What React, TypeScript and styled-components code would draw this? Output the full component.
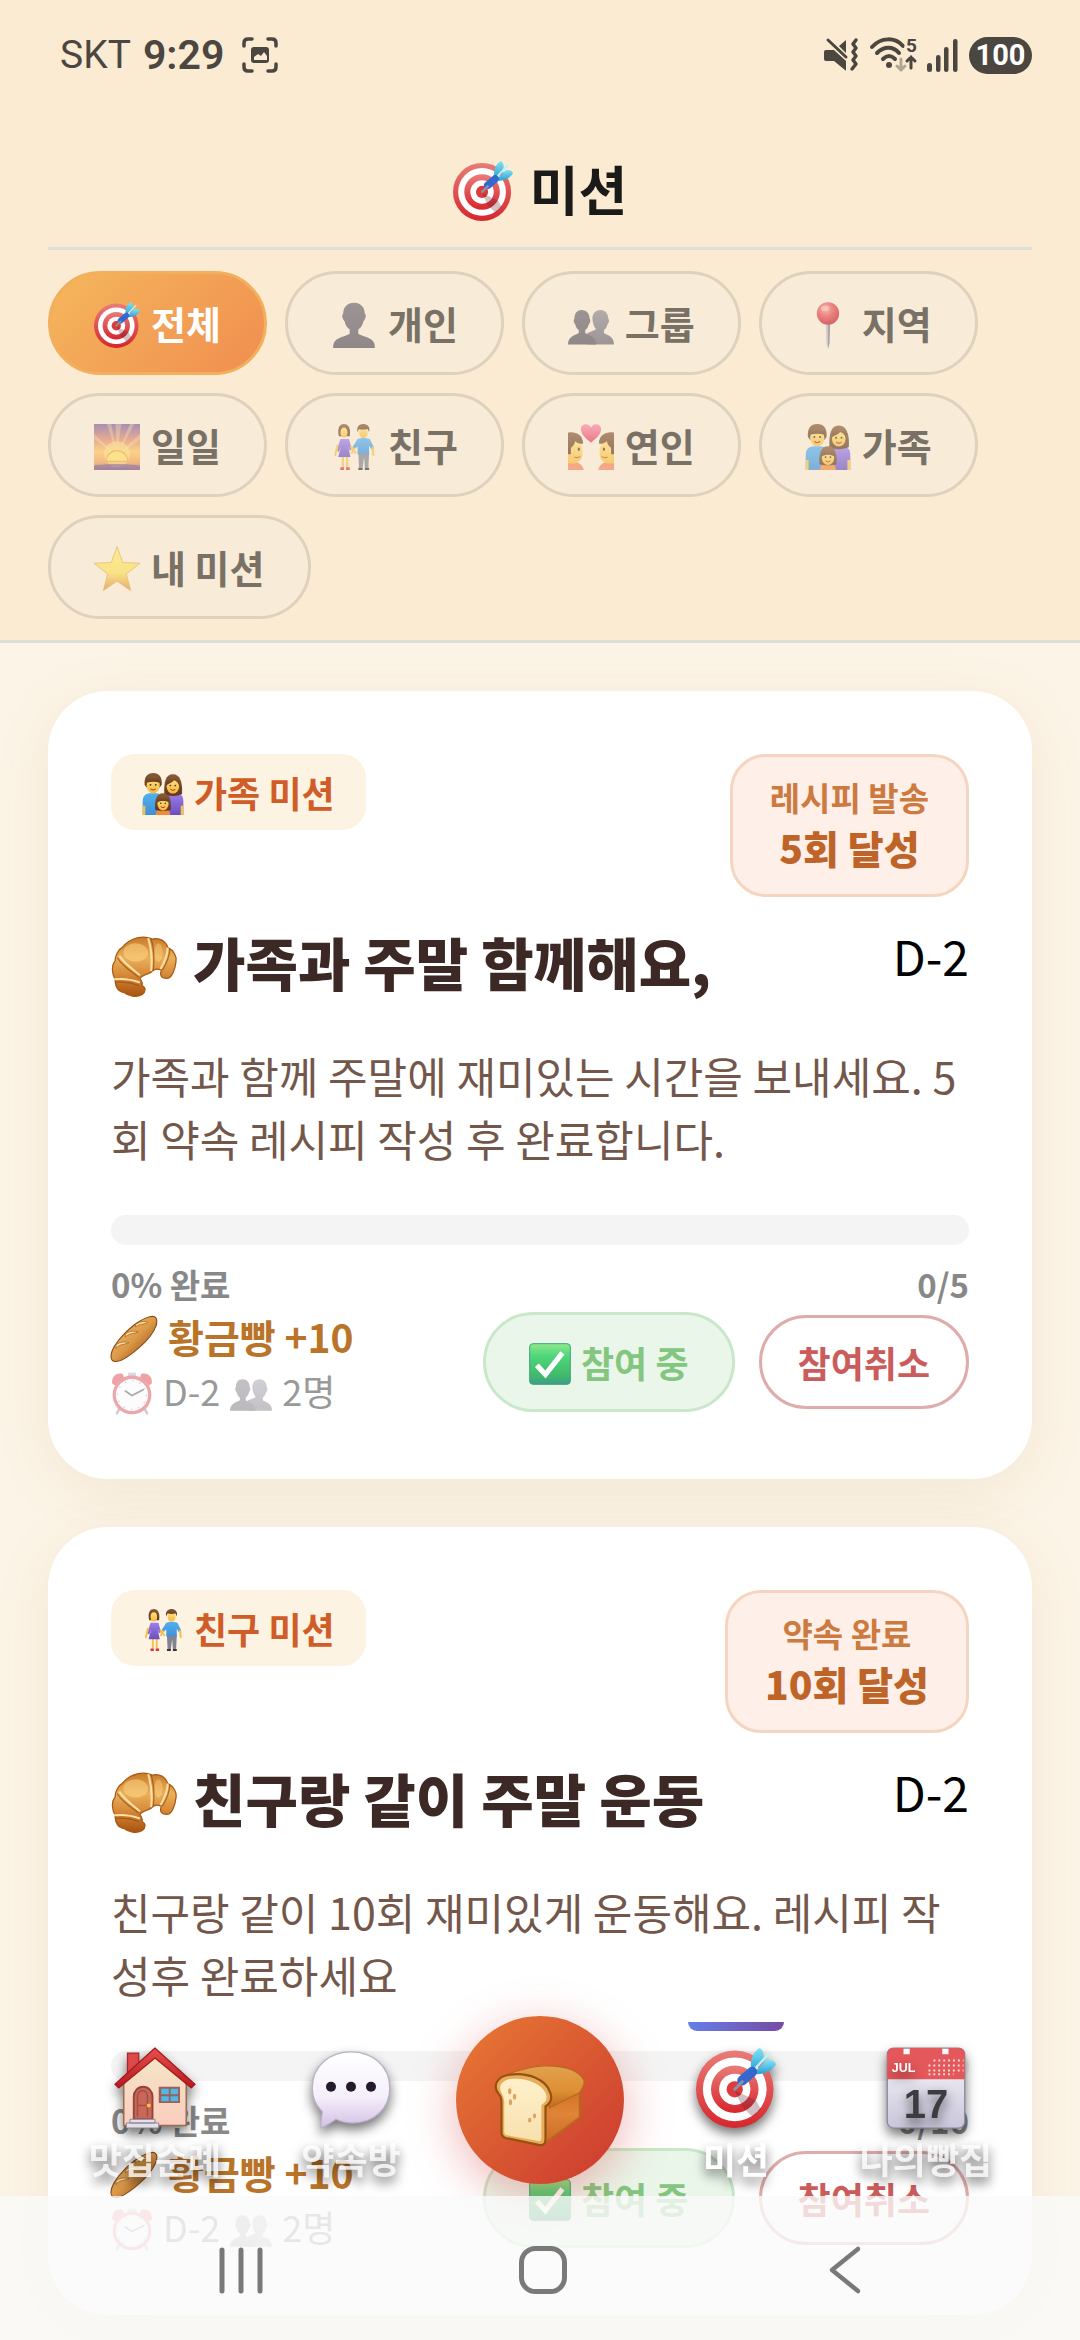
import React from "react";
import styled, { createGlobalStyle } from "styled-components";

const GlobalStyle = createGlobalStyle`
  *, *::before, *::after { box-sizing: border-box; }
  html { background: #fcf4e6; }
  body {
    margin: 0;
    font-family: "Noto Sans CJK KR", "Noto Sans", sans-serif;
    color: #000;
    -webkit-font-smoothing: antialiased;
  }
  button { font-family: inherit; cursor: pointer; }
  h1, h2, p { margin: 0; }
`;

/* ---------- drawings ---------- */

/* $drop lowers a glyph inside a centred row so that it sits on the text's baseline */
const Glyph = styled.svg<{ $size: number; $fade?: number; $drop?: number }>`
  display: block;
  flex: none;
  width: ${(p) => p.$size}px;
  height: ${(p) => p.$size}px;
  margin-top: ${(p) => p.$drop ?? 4}px;
  opacity: ${(p) => p.$fade ?? 1};
  overflow: visible;
`;

const HiddenDefs = styled.svg`
  position: absolute;
  width: 0;
  height: 0;
`;

type Stop = [string, string];
const gradients: { id: string; stops: Stop[]; dir?: "v" | "d" | "r" }[] = [
  { id: "gRed", stops: [["0", "#e97c78"], ["1", "#d7262c"]], dir: "v" },
  { id: "gDart", stops: [["0", "#7fe3f5"], ["1", "#2b9fd0"]], dir: "v" },
  { id: "gBust", stops: [["0", "#6a6570"], ["1", "#5a5260"]], dir: "v" },
  { id: "gBust2", stops: [["0", "#8d8a92"], ["1", "#6d6675"]], dir: "v" },
  { id: "gPin", stops: [["0", "#f49a9a"], ["0.5", "#e5494f"], ["1", "#c01f2c"]], dir: "r" },
  { id: "gSky", stops: [["0", "#7c5fa0"], ["0.35", "#e08b6c"], ["0.6", "#fcc45e"], ["0.85", "#f19a52"], ["1", "#7c4f86"]], dir: "v" },
  { id: "gStar", stops: [["0", "#fff06a"], ["0.6", "#fbdc5c"], ["1", "#dc8a3c"]], dir: "v" },
  { id: "gHair", stops: [["0", "#8a5a35"], ["1", "#5f3820"]], dir: "v" },
  { id: "gSkin", stops: [["0", "#ffe07a"], ["1", "#f5b83d"]], dir: "v" },
  { id: "gBlue", stops: [["0", "#52b1ee"], ["1", "#3f8fd8"]], dir: "v" },
  { id: "gViolet", stops: [["0", "#9c7fe8"], ["1", "#6b4ec0"]], dir: "v" },
  { id: "gHeart", stops: [["0", "#fb8ba6"], ["1", "#e23a62"]], dir: "v" },
  { id: "gCrust", stops: [["0", "#c97a2a"], ["0.35", "#eab05a"], ["0.6", "#d98e3c"], ["1", "#a8520f"]], dir: "v" },
  { id: "gBag", stops: [["0", "#f3c277"], ["0.5", "#dd9a48"], ["1", "#7d3c0c"]], dir: "d" },
  { id: "gCheck", stops: [["0", "#8fe88c"], ["0.3", "#4fd67a"], ["0.8", "#40b86a"], ["1", "#3f9c90"]], dir: "v" },
  { id: "gWall", stops: [["0", "#f3e6c4"], ["1", "#fbcdbf"]], dir: "v" },
  { id: "gRoof", stops: [["0", "#e8504e"], ["1", "#b5191f"]], dir: "v" },
  { id: "gBubble", stops: [["0", "#ffffff"], ["0.6", "#f4effa"], ["1", "#d3bfe6"]], dir: "v" },
  { id: "gLoafTop", stops: [["0", "#e2a14e"], ["0.6", "#dd8f33"], ["1", "#c06a1c"]], dir: "v" },
  { id: "gLoafSide", stops: [["0", "#c96c20"], ["0.5", "#e08438"], ["1", "#c96a22"]], dir: "v" },
  { id: "gCrumb", stops: [["0", "#fff0cb"], ["1", "#f8e0ae"]], dir: "v" },
  { id: "gPage", stops: [["0", "#fafafc"], ["1", "#c9c6da"]], dir: "v" },
];

const Defs = () => (
  <HiddenDefs aria-hidden="true">
    <defs>
      {gradients.map((g) =>
        g.dir === "r" ? (
          <radialGradient key={g.id} id={g.id} cx="0.4" cy="0.3" r="0.7">
            {g.stops.map(([o, c]) => <stop key={o} offset={o} stopColor={c} />)}
          </radialGradient>
        ) : (
          <linearGradient key={g.id} id={g.id} x1="0" y1="0" x2={g.dir === "d" ? "1" : "0"} y2="1">
            {g.stops.map(([o, c]) => <stop key={o} offset={o} stopColor={c} />)}
          </linearGradient>
        )
      )}
    </defs>
  </HiddenDefs>
);

const Target = () => (
  <>
    <circle cx="31" cy="33" r="31" fill="url(#gRed)" />
    <circle cx="31" cy="33" r="25.5" fill="#fff" />
    <circle cx="31" cy="33" r="19" fill="url(#gRed)" />
    <circle cx="31" cy="33" r="12.5" fill="#fff" />
    <circle cx="31" cy="33" r="6.5" fill="#dc3a3c" />
    <path d="M31 34l6 13 8 8 7-6-4-7z" fill="#5b2030" opacity=".28" />
    <path d="M44 16c-1-7 2-13 7-16 3 2 4 6 2 10l-7 9z" fill="url(#gDart)" />
    <path d="M47 19l9-9c4-1 7 0 8 3-3 5-9 8-15 8z" fill="url(#gDart)" />
    <path d="M44 20L58 5" stroke="#b9f3fb" strokeWidth="2" strokeLinecap="round" />
    <path d="M37 26L45 19" stroke="#3568cf" strokeWidth="8" strokeLinecap="round" />
    <path d="M31 33l6-6" stroke="#8a93a8" strokeWidth="2.5" strokeLinecap="round" />
  </>
);

const Bust = () => (
  <path d="M32 1c9 0 15 6 15 15 1 1 2 3 1 6-1 3-2 4-3 5-1 6-4 9-7 11v6c3 3 20 5 22 13 1 3 1 5 1 7H3c0-2 0-4 1-7 2-8 19-10 22-13v-6c-3-2-6-5-7-11-1-1-2-2-3-5-1-3 0-5 1-6C17 7 23 1 32 1z" fill="url(#gBust)" />
);

const Busts = () => (
  <>
    <path d="M45 11c7 0 11 5 11 12 2 2 1 6-1 8-1 4-3 7-5 8v4c4 3 14 4 14 16H27V43c5-2 9-3 12-5-3-4-5-9-5-15 0-7 4-12 11-12z" fill="url(#gBust2)" />
    <path d="M19 11c7 0 11 5 11 12 2 2 1 6-1 8-1 4-3 7-5 8v4c4 3 15 4 15 16H0c0-12 11-13 15-16v-4c-2-1-4-4-5-8-2-2-3-6-1-8 0-7 3-12 10-12z" fill="url(#gBust)" />
  </>
);

const Pin = () => (
  <>
    <path d="M29 30h6l-1 28-2 7-2-7z" fill="#b9b8c2" />
    <path d="M32 30h3l-1 28-2 7z" fill="#85828f" />
    <circle cx="32" cy="16" r="15.5" fill="url(#gPin)" />
    <ellipse cx="28" cy="9" rx="6" ry="4" fill="#fff" opacity=".3" />
  </>
);

const Sunrise = () => (
  <>
    <rect width="64" height="64" fill="url(#gSky)" />
    <path d="M32 44L18 0h6zM32 44L30 0h8zM32 44L50 0h6zM32 44L0 14v7zM32 44L64 14v8z" fill="#ffe9a0" opacity=".35" />
    <circle cx="32" cy="42" r="18" fill="#ffe680" opacity=".5" />
    <path d="M17 52a15 15 0 0130 0z" fill="#ffdc66" stroke="#f0a63c" strokeWidth="1.5" />
    <path d="M0 58c14-3 48-3 64 0v6H0z" fill="#6f4b86" opacity=".7" />
  </>
);

const Star = () => (
  <path d="M32 1l8 22 24 1-19 15 6 23-19-13-19 13 6-23L0 24l24-1z" fill="url(#gStar)" stroke="#dc9a3a" strokeWidth="1" />
);

const Couple = () => (
  <>
    <path d="M11 17C8 4 13 0 18 0s10 4 8 17z" fill="url(#gHair)" />
    <path d="M15 40h3v20h-3zM21 40h3v20h-3z" fill="#f2c14e" />
    <path d="M13 21h12l4 14-3 2-2-6 3 15H10l4-15-3 8-3-2z" fill="url(#gViolet)" />
    <path d="M9 30l-3 13M28 32l6 8" stroke="#f2c14e" strokeWidth="3" strokeLinecap="round" />
    <ellipse cx="18" cy="12" rx="5" ry="7" fill="url(#gSkin)" />
    <path d="M13 60h5v4h-5zM21 60h5v4h-5z" fill="#d8323e" />
    <path d="M38 40h15l-1 21h-5l-1-15-2 15h-5z" fill="#83838f" />
    <path d="M37 21c5-2 12-2 17 0l6 12-4 2-3-5v12H37V31l-4 4-3-3z" fill="url(#gBlue)" />
    <path d="M58 33l1 10M32 34l-3 6" stroke="#f2c14e" strokeWidth="3" strokeLinecap="round" />
    <ellipse cx="45" cy="12" rx="6" ry="7.5" fill="url(#gSkin)" />
    <path d="M37 11C35 3 40 0 45 0s10 3 8 11l-2-4c-4 1-8 1-12 0z" fill="url(#gHair)" />
    <path d="M38 61h6v3h-6zM47 61h6v3h-6z" fill="#3c3138" />
  </>
);

const Lovers = () => (
  <>
    <path d="M32 26C22 18 18 13 18 7c0-8 11-9 14-2 3-7 14-6 14 2 0 6-4 11-14 19z" fill="url(#gHeart)" />
    <path d="M0 52c10-1 20 2 22 12H0zM64 52c-10-1-20 2-22 12h22z" fill="#f4845c" />
    <path d="M0 22h14c5 6 7 14 6 22-2 8-8 11-14 11H0z" fill="url(#gSkin)" />
    <path d="M64 22H50c-5 6-7 14-6 22 2 8 8 11 14 11h6z" fill="url(#gSkin)" />
    <path d="M0 12c10-2 21 3 21 15-4 1-8 0-11-3-1 5-4 8-6 9v9H0z" fill="url(#gHair)" />
    <path d="M64 12c-10-2-21 3-21 15 4 1 8 0 11-3 1 5 4 8 6 9v9h4z" fill="url(#gHair)" />
    <ellipse cx="15" cy="35" rx="1.4" ry="2.4" fill="#4a2f22" />
    <ellipse cx="50" cy="35" rx="1.4" ry="2.4" fill="#4a2f22" />
    <path d="M9 46q4 2 8-1M55 46q-4 2-8-1" stroke="#a85c2a" strokeWidth="1.5" fill="none" />
  </>
);

const Face = ({ x, y, s }: { x: number; y: number; s: number }) => (
  <g transform={`translate(${x} ${y}) scale(${s})`}>
    <ellipse rx="10" ry="12" fill="url(#gSkin)" />
    <circle cx="-4" cy="-1" r="1.4" fill="#4a2f22" />
    <circle cx="4" cy="-1" r="1.4" fill="#4a2f22" />
    <path d="M-4 5q4 4 8 0" stroke="#a2382a" strokeWidth="1.6" fill="none" />
  </g>
);

const Family = () => (
  <>
    <path d="M1 64V43c0-8 5-12 12-12h8c7 0 11 4 11 12v21z" fill="url(#gBlue)" />
    <path d="M32 64V43c0-8 5-12 12-12h7c8 0 12 4 12 12v21z" fill="url(#gViolet)" />
    <path d="M1 50h4v14H1zM59 50h4v14h-4z" fill="#f2c14e" />
    <path d="M34 32c-1-18 2-30 13-30s15 12 14 30c-6 4-22 4-27 0z" fill="url(#gHair)" />
    <path d="M4 18C3 6 8 0 17 0s14 6 13 18l-3 4H7z" fill="url(#gHair)" />
    <Face x={17} y={19} s={1} />
    <path d="M7 15C7 7 12 5 17 5s10 2 10 10c-6-2-14-2-20 0z" fill="url(#gHair)" />
    <Face x={47} y={20} s={0.95} />
    <path d="M37 19c0-9 4-13 10-13s10 4 10 13c-2-5-5-7-8-8-3 4-8 4-12 8z" fill="url(#gHair)" />
    <path d="M21 64c0-7 4-9 11-9s11 2 11 9z" fill="#f08a3c" />
    <path d="M20 56c-1-17 3-25 12-25s13 8 12 25c-4 2-20 2-24 0z" fill="url(#gHair)" />
    <Face x={32} y={47} s={0.85} />
    <path d="M23 45c0-7 3-10 9-10s9 3 9 10c-5-3-13-3-18 0z" fill="url(#gHair)" />
  </>
);

const Croissant = () => (
  <>
    <path d="M11 12C19 2 32 0 40 4c7-2 13 2 15 8 6 3 9 9 8 14-1 8-4 16-9 16-6 0-7-4-5-8-5-2-8-1-10 2-5 3-9 3-11 6 2 3 3 5 2 7 4 2 4 6 0 9-6 3-13 1-17-2-7-1-9-7-9-13C1 38 0 30 4 25c0-5 3-11 7-13z" fill="url(#gCrust)" stroke="#a8580f" strokeWidth="1.2" />
    <ellipse cx="24" cy="17" rx="12" ry="9" fill="#ffd98a" opacity=".5" />
    <ellipse cx="46" cy="17" rx="4" ry="9" fill="#ffd98a" opacity=".4" />
    <path d="M8 20c5 8 13 13 20 19M36 3c3 9 4 20 3 32M55 12c0 8-3 14-7 21M3 43c9-1 17 0 25 3" stroke="#fbe0a4" strokeWidth="2" fill="none" />
    <path d="M6 22c5 8 13 13 21 19M39 4c3 9 3 20 2 31M57 13c0 8-3 14-7 21M4 46c9-1 15 0 23 3" stroke="#9a4c0c" strokeWidth="1.2" fill="none" opacity=".7" />
  </>
);

const Baguette = () => (
  <>
    <path d="M2 62C-3 56 2 44 11 33 23 18 41 4 54 1c9-2 11 3 9 12-4 11-13 22-25 32C24 57 9 67 2 62z" fill="url(#gBag)" stroke="#8a460f" strokeWidth="1.5" />
    <path d="M7 40c7-5 13-4 18-3-5 3-12 1-18 8zM20 25c7-5 13-4 18-3-5 3-11 1-18 7zM34 12c7-5 13-5 17-3-4 3-10 1-17 6z" fill="#fde7b0" stroke="#a05e1c" strokeWidth="1" />
  </>
);

const Clock = () => (
  <>
    <path d="M2 18C0 8 8 0 18 3l2 6L7 21zM62 18C64 8 56 0 46 3l-2 6 13 12z" fill="#e0484e" />
    <path d="M26 1h12v6H26z" fill="#b9b6c0" />
    <path d="M14 54l-5 9M50 54l5 9" stroke="#9d9aa6" strokeWidth="4" strokeLinecap="round" />
    <circle cx="32" cy="35" r="27" fill="#fbfafc" stroke="#dc5258" strokeWidth="5" />
    <circle cx="32" cy="35" r="22" fill="none" stroke="#8c8894" strokeWidth="2" strokeDasharray="1.5 10" />
    <path d="M22 29l10 7 17-9" stroke="#55515c" strokeWidth="2.6" fill="none" strokeLinecap="round" />
  </>
);

const Check = () => (
  <>
    <rect x="1" y="1" width="62" height="62" rx="5" fill="url(#gCheck)" stroke="#3da47a" strokeWidth="1.5" />
    <path d="M12 34l13 14 26-33" stroke="#fff" strokeWidth="8" fill="none" />
  </>
);

const House = () => (
  <>
    <path d="M10 4h9v20h-9z" fill="#dd4848" stroke="#a8242a" strokeWidth="1" />
    <path d="M7 26L32 5l25 21v36H7z" fill="url(#gWall)" stroke="#9c6a4c" strokeWidth="1.2" />
    <path d="M32 0L0 29l3 3L32 8l29 24 3-3z" fill="url(#gRoof)" stroke="#a3171d" strokeWidth="1" />
    <path d="M15 57V39a7.500 8 0 0115 0v18z" fill="#c9675a" stroke="#92443c" strokeWidth="1.5" />
    <path d="M18 55V39a4 5 0 018 0v16M18 46h8" fill="none" stroke="#a5503f" strokeWidth="1.2" />
    <circle cx="27" cy="46" r="1.600" fill="#f7c13a" />
    <path d="M35 31h17v13H35z" fill="#9f5f52" />
    <path d="M37 32.500h6v4.500h-6zM44.500 32.500h6v4.500h-6zM37 38.500h6v4h-6zM44.500 38.500h6v4h-6z" fill="#4cb9ea" />
    <path d="M12 57h20v3H12zM9 60h26v4H9z" fill="#e4e0ea" stroke="#8d8794" strokeWidth=".8" />
  </>
);

const Bubble = () => (
  <>
    <path d="M32 3c17 0 31 11 31 29 0 17-13 28-30 28-5 0-9-1-13-3-3 2-7 5-12 7-1-5 1-9 1-13C4 46 1 40 1 32 1 14 15 3 32 3z" fill="url(#gBubble)" stroke="#b8b0c2" strokeWidth="1" />
    <circle cx="16" cy="31" r="4" fill="#231a2b" />
    <circle cx="32" cy="31" r="4" fill="#231a2b" />
    <circle cx="48" cy="31" r="4" fill="#231a2b" />
  </>
);

const Loaf = () => (
  <>
    <path d="M36 33L63 16l-2 8v17L34 61z" fill="url(#gLoafSide)" stroke="#b9661f" strokeWidth="1.5" />
    <path d="M3 12C14 7 24 4 35 3.500c16-.5 26 4 29 10.500 1 5-2 6-3 9L39 34C37 20 22 11 3 12z" fill="url(#gLoafTop)" stroke="#b9691f" strokeWidth="1" />
    <path d="M2 24C-3 18 1 11 10 10c14-2 26 4 29 12 3 6 0 9-3 11v24q0 5-5 4L7 56q-3-1-3-4V30q0-4-2-6z" fill="#e8ad5c" stroke="#96500f" strokeWidth="1.600" />
    <path d="M4 23c-3-5 1-9 7-10 12-1 22 4 25 10 2 5 0 7-3 9v24q0 3-3 2L8 54q-2 0-2-3V30q0-4-2-7z" fill="url(#gCrumb)" />
    <ellipse cx="10" cy="22" rx="1.200" ry="2.200" fill="#dba560" />
    <ellipse cx="13.500" cy="26" rx="1.200" ry="2.200" fill="#dba560" />
    <ellipse cx="10.500" cy="30" rx="1.200" ry="2.200" fill="#dba560" />
    <ellipse cx="28" cy="40" rx="1.200" ry="1.800" fill="#dba560" />
    <ellipse cx="24.500" cy="43" rx="1.200" ry="1.800" fill="#dba560" />
  </>
);

const CalendarText = styled.text`
  font-family: "Liberation Sans", Arial, sans-serif;
  font-weight: 700;
  text-anchor: middle;
`;

const CalendarPage = () => (
  <>
    <rect x="1" y="0" width="62" height="64" rx="5" fill="url(#gPage)" stroke="#8a869b" strokeWidth="1" />
    <path d="M1 25V5q0-5 5-5h8v5h5V0h26v5h5V0h8q5 0 5 5v20z" fill="#e4575a" />
    <CalendarText x="14" y="19" fontSize="10" fill="#fff">JUL</CalendarText>
    <path d="M38 10h24M34 14h28M34 18h28M34 21h20" stroke="#fff" strokeWidth="1.500" strokeDasharray="1.500 2.400" opacity=".8" />
    <CalendarText x="32" y="56" fontSize="32" fill="#3c3c40">17</CalendarText>
  </>
);

const drawings = {
  target: Target, bust: Bust, busts: Busts, pin: Pin, sunrise: Sunrise, star: Star,
  couple: Couple, lovers: Lovers, family: Family, croissant: Croissant, baguette: Baguette,
  clock: Clock, check: Check, house: House, bubble: Bubble, loaf: Loaf, calendar: CalendarPage,
};
type EmojiName = keyof typeof drawings;

const Emoji = ({ name, size, fade, drop }: { name: EmojiName; size: number; fade?: number; drop?: number }) => {
  const Drawing = drawings[name];
  return (
    <Glyph viewBox="0 0 64 64" $size={size} $fade={fade} $drop={drop} aria-hidden="true">
      <Drawing />
    </Glyph>
  );
};

/* ---------- header ---------- */

const Screen = styled.div`
  min-height: 100vh;
  background: #fcf4e6;
`;

const Header = styled.header`
  background: #faebd2;
  border-bottom: 3px solid #e0dedb;
`;

const StatusBar = styled.div`
  display: flex;
  justify-content: space-between;
  align-items: center;
  height: 110px;
  padding: 0 48px 0 60px;
  color: #4b463f;
  font-family: Roboto, sans-serif;
  font-size: 39px;
`;

const StatusGroup = styled.div<{ $gap: number }>`
  display: flex;
  align-items: center;
  gap: ${(p) => p.$gap}px;
`;

const Time = styled.span`
  font-size: 41px;
  font-weight: 600;
`;

const StatusIcon = styled.svg<{ $w: number; $h: number }>`
  display: block;
  width: ${(p) => p.$w}px;
  height: ${(p) => p.$h}px;
  overflow: visible;
`;

const Battery = styled.span`
  display: flex;
  align-items: center;
  justify-content: center;
  width: 63px;
  height: 37px;
  border-radius: 19px;
  background: #4b463f;
  color: #fff;
  font-size: 29px;
  font-weight: 700;
`;

const SmallCaption = styled.text`
  font-family: Roboto, sans-serif;
  font-weight: 700;
`;

const HeaderBody = styled.div`
  padding: 0 48px 21px;
`;

const TitleRow = styled.div`
  display: flex;
  align-items: center;
  justify-content: center;
  gap: 17px;
  height: 140px;
  padding: 18px 0 0;
  margin-bottom: 21px;
  border-bottom: 3px solid #e0dedb;
`;

const PageTitle = styled.h1`
  font-size: 53px;
  line-height: 78px;
  font-weight: 600;
  color: #1a1a18;
`;

const Chips = styled.nav`
  display: flex;
  flex-wrap: wrap;
  gap: 18px;
`;

const Chip = styled.button<{ $active?: boolean }>`
  display: flex;
  align-items: center;
  gap: 11px;
  padding: 21px 43px;
  border: 3px solid ${(p) => (p.$active ? "#f2b05e" : "#ded1bd")};
  border-radius: 52px;
  background: ${(p) => (p.$active ? "linear-gradient(135deg, #f5b75c, #f08d50) border-box" : "#f8ecd8")};
  color: ${(p) => (p.$active ? "#fff" : "#797166")};
  font-size: 38px;
  line-height: 56px;
  font-weight: 600;
`;

/* ---------- mission cards ---------- */

const Feed = styled.main`
  display: flex;
  flex-direction: column;
  gap: 48px;
  padding: 48px 48px 25px;
`;

const Card = styled.article`
  padding: 63px;
  border-radius: 60px;
  background: #fff;
  box-shadow: 0 12px 60px rgba(139, 110, 50, 0.09);
`;

const CardTop = styled.div`
  display: flex;
  justify-content: space-between;
  align-items: flex-start;
`;

const Tag = styled.span`
  display: flex;
  align-items: center;
  gap: 10px;
  padding: 12px 31px;
  border-radius: 24px;
  background: #fcf3e2;
  color: #d05c28;
  font-size: 36px;
  line-height: 52px;
  font-weight: 600;
`;

const Goal = styled.div`
  display: flex;
  flex-direction: column;
  align-items: center;
  padding: 15px 37px 21px;
  border: 3px solid #f5d5bf;
  border-radius: 36px;
  background: #fef0e8;
`;

const GoalKind = styled.span`
  color: #cc7a40;
  font-size: 33px;
  line-height: 50px;
  font-weight: 600;
`;

const GoalCount = styled.span`
  color: #be6428;
  font-size: 39px;
  line-height: 51px;
  font-weight: 800;
`;

const TitleLine = styled.div`
  display: flex;
  justify-content: space-between;
  align-items: flex-start;
  margin-top: 24px;
`;

const CardTitle = styled.h2`
  display: flex;
  align-items: center;
  gap: 16px;
  font-size: 57px;
  line-height: 81px;
  font-weight: 800;
  color: #3c2824;
`;

const DDay = styled.span`
  font-size: 48px;
  line-height: 69px;
`;

const Description = styled.p`
  margin-top: 42px;
  font-size: 43px;
  line-height: 63px;
  color: #73574b;
`;

const Track = styled.div`
  height: 30px;
  margin-top: 45px;
  border-radius: 15px;
  background: #f4f4f4;
  overflow: hidden;
`;

const Fill = styled.div`
  height: 100%;
  background: #f2a65a;
`;

const ProgressText = styled.div`
  display: flex;
  justify-content: space-between;
  margin-top: 15px;
  font-size: 33px;
  line-height: 48px;
  font-weight: 600;
  color: #888;
`;

const CardFooter = styled.div`
  display: flex;
  justify-content: space-between;
  align-items: center;
`;

const Reward = styled.div`
  display: flex;
  align-items: center;
  gap: 11px;
  font-size: 39px;
  line-height: 57px;
  font-weight: 700;
  color: #b9742a;
`;

const Meta = styled.div`
  display: flex;
  align-items: center;
  gap: 10px;
  font-size: 36px;
  line-height: 51px;
  color: #999;
`;

const Actions = styled.div`
  display: flex;
  align-items: center;
  gap: 24px;
`;

const Joined = styled.button`
  display: flex;
  align-items: center;
  gap: 10px;
  padding: 21px 43px;
  border: 3px solid #c9e7c9;
  border-radius: 50px;
  background: #eaf6ea;
  color: #84c67f;
  font-size: 36px;
  line-height: 52px;
  font-weight: 600;
`;

const Leave = styled.button`
  padding: 18px 36px;
  border: 3px solid #e0abab;
  border-radius: 48px;
  background: #fff;
  color: #cb5c5c;
  font-size: 36px;
  line-height: 52px;
  font-weight: 600;
`;

/* ---------- bottom bars ---------- */

const TabBar = styled.nav`
  position: fixed;
  left: 0;
  right: 0;
  bottom: 144px;
  display: grid;
  grid-template-columns: 196fr 196fr 182fr 210fr 170fr;
  justify-items: center;
  align-items: start;
  padding: 0 69px 0 57px;
`;

const Tab = styled.button<{ $active?: boolean }>`
  position: relative;
  display: flex;
  flex-direction: column;
  align-items: center;
  gap: 3px;
  padding: 22px 0 11px;
  border: 0;
  background: none;
  color: ${(p) => (p.$active ? "#fff" : "rgba(255, 255, 255, 0.8)")};
  font-size: 36px;
  line-height: 54px;
  font-weight: 600;
  white-space: nowrap;
  text-shadow: 0 6px 12px rgba(0, 0, 0, 0.6);

  svg { filter: drop-shadow(0 6px 6px rgba(0, 0, 0, 0.55)); }
`;

const Indicator = styled.span`
  position: absolute;
  top: 0;
  left: 50%;
  width: 96px;
  height: 9px;
  margin-left: -48px;
  border-radius: 0 0 9px 9px;
  background: linear-gradient(90deg, #667eea, #764ba2);
`;

const BreadButton = styled.button`
  display: flex;
  align-items: center;
  justify-content: center;
  width: 168px;
  height: 168px;
  margin-top: -6px;
  padding: 0;
  border: 0;
  border-radius: 50%;
  background: linear-gradient(135deg, #e87a34, #cb3830);
  box-shadow: 0 12px 48px rgba(211, 47, 47, 0.35);
`;

const SystemBar = styled.div`
  position: fixed;
  left: 0;
  right: 0;
  bottom: 0;
  display: flex;
  height: 144px;
  padding: 0 84px 46px 90px;
  background: rgba(250, 250, 250, 0.8);
`;

const SystemButton = styled.button`
  flex: 1;
  display: flex;
  align-items: flex-end;
  justify-content: center;
  padding: 0;
  border: 0;
  background: none;
  color: #797979;
`;

/* ---------- data ---------- */

const filters: { icon: EmojiName; label: string }[] = [
  { icon: "target", label: "전체" },
  { icon: "bust", label: "개인" },
  { icon: "busts", label: "그룹" },
  { icon: "pin", label: "지역" },
  { icon: "sunrise", label: "일일" },
  { icon: "couple", label: "친구" },
  { icon: "lovers", label: "연인" },
  { icon: "family", label: "가족" },
  { icon: "star", label: "내 미션" },
];

type Mission = {
  icon: EmojiName; kind: string; goal: string; title: string; text: string;
  done: number; total: number; reward: number; dday: string; people: number;
};

const missions: Mission[] = [
  {
    icon: "family", kind: "가족 미션", goal: "레시피 발송", title: "가족과 주말 함께해요,",
    text: "가족과 함께 주말에 재미있는 시간을 보내세요. 5회 약속 레시피 작성 후 완료합니다.",
    done: 0, total: 5, reward: 10, dday: "D-2", people: 2,
  },
  {
    icon: "couple", kind: "친구 미션", goal: "약속 완료", title: "친구랑 같이 주말 운동",
    text: "친구랑 같이 10회 재미있게 운동해요. 레시피 작성후 완료하세요",
    done: 0, total: 10, reward: 10, dday: "D-2", people: 2,
  },
];

const MissionCard = ({ m }: { m: Mission }) => {
  const percent = Math.round((m.done / m.total) * 100);
  return (
    <Card>
      <CardTop>
        <Tag><Emoji name={m.icon} size={42} />{m.kind}</Tag>
        <Goal>
          <GoalKind>{m.goal}</GoalKind>
          <GoalCount>{`${m.total}회 달성`}</GoalCount>
        </Goal>
      </CardTop>
      <TitleLine>
        <CardTitle><Emoji name="croissant" size={66} drop={12} />{m.title}</CardTitle>
        <DDay>{m.dday}</DDay>
      </TitleLine>
      <Description>{m.text}</Description>
      <Track role="progressbar" aria-label="진행률" aria-valuenow={percent}>
        <Fill style={{ width: `${percent}%` }} />
      </Track>
      <ProgressText>
        <span>{`${percent}% 완료`}</span>
        <span>{`${m.done}/${m.total}`}</span>
      </ProgressText>
      <CardFooter>
        <div>
          <Reward><Emoji name="baguette" size={46} />{`황금빵 +${m.reward}`}</Reward>
          <Meta>
            <Emoji name="clock" size={42} fade={0.5} />
            <span>{m.dday}</span>
            <Emoji name="busts" size={42} fade={0.4} />
            <span>{`${m.people}명`}</span>
          </Meta>
        </div>
        <Actions>
          <Joined><Emoji name="check" size={42} />참여 중</Joined>
          <Leave>참여취소</Leave>
        </Actions>
      </CardFooter>
    </Card>
  );
};

const StatusLine = () => (
  <StatusBar>
    <StatusGroup $gap={18}>
      <StatusGroup $gap={12}>
        <span>SKT</span>
        <Time>9:29</Time>
      </StatusGroup>
      <StatusIcon $w={36} $h={36} viewBox="0 0 36 36" fill="none" stroke="#4b463f" strokeWidth="3.500" strokeLinecap="round" aria-hidden="true">
        <path d="M2 9V6q0-4 4-4h4M26 2h4q4 0 4 4v3M34 27v3q0 4-4 4h-4M10 34H6q-4 0-4-4v-3" />
        <rect x="9" y="10" width="18" height="16" rx="3" fill="#4b463f" stroke="none" />
        <path d="M12 23v-3l4-3 3 2 3-4 3 4v4z" fill="#faebd2" stroke="none" />
      </StatusIcon>
    </StatusGroup>
    <StatusGroup $gap={11}>
      <StatusIcon $w={35} $h={34} viewBox="0 0 35 34" fill="none" stroke="#4b463f" aria-hidden="true">
        <path d="M2 12h8l12 11v9q0 1-1 0L10 23H2q-2 0-2-2v-7q0-2 2-2zM15 8l7-6v13z" fill="#4b463f" stroke="none" />
        <path d="M4 2l18 17" strokeWidth="3" strokeLinecap="round" />
        <path d="M32 2l-3 4 3 4-3 4 3 4-3 4 3 4-4 5" strokeWidth="3.500" strokeLinecap="round" strokeLinejoin="round" />
      </StatusIcon>
      <StatusIcon $w={46} $h={34} viewBox="0 0 46 34" fill="none" stroke="#4b463f" strokeWidth="4" strokeLinecap="round" aria-hidden="true">
        <path d="M2 9C11-1 25-1 33 8M7 15c7-7 16-7 22 0M13 21c4-4 8-4 12 0" />
        <circle cx="19" cy="27" r="3" fill="#4b463f" stroke="none" />
        <path d="M31 21v11M27 28l4 4 4-4" stroke="#b3a793" strokeWidth="3" />
        <path d="M41 30V19M37 23l4-4 4 4" strokeWidth="3" />
        <SmallCaption x="36" y="14" fontSize="19" fill="#4b463f" stroke="#faebd2" strokeWidth="5" paintOrder="stroke">5</SmallCaption>
      </StatusIcon>
      <StatusIcon $w={31} $h={34} viewBox="0 0 31 34" fill="#4b463f" aria-hidden="true">
        <rect x="0" y="25" width="5" height="9" rx="2.500" />
        <rect x="9" y="17" width="4.500" height="17" rx="2.200" />
        <rect x="17" y="9" width="4.500" height="25" rx="2.200" />
        <rect x="26" y="1" width="4.500" height="33" rx="2.200" />
      </StatusIcon>
      <Battery>100</Battery>
    </StatusGroup>
  </StatusBar>
);

export default function App() {
  return (
    <Screen>
      <GlobalStyle />
      <Defs />
      <Header>
        <StatusLine />
        <HeaderBody>
          <TitleRow>
            <Emoji name="target" size={60} drop={6} />
            <PageTitle>미션</PageTitle>
          </TitleRow>
          <Chips aria-label="미션 종류">
            {filters.map((f, i) => (
              <Chip key={f.label} $active={i === 0}>
                <Emoji name={f.icon} size={46} fade={i === 0 ? 1 : 0.65} />
                {f.label}
              </Chip>
            ))}
          </Chips>
        </HeaderBody>
      </Header>
      <Feed>
        {missions.map((m) => <MissionCard key={m.title} m={m} />)}
      </Feed>
      <TabBar>
        <Tab><Emoji name="house" size={80} />맛집순례</Tab>
        <Tab><Emoji name="bubble" size={80} />약속방</Tab>
        <BreadButton aria-label="빵 굽기"><Emoji name="loaf" size={88} drop={10} /></BreadButton>
        <Tab $active><Indicator /><Emoji name="target" size={80} />미션</Tab>
        <Tab><Emoji name="calendar" size={80} />나의빵집</Tab>
      </TabBar>
      <SystemBar>
        <SystemButton aria-label="최근 앱">
          <StatusIcon $w={48} $h={48} viewBox="0 0 48 48" stroke="currentColor" strokeWidth="5" strokeLinecap="round" aria-hidden="true">
            <path d="M5 4v41M24 4v41M43 4v41" />
          </StatusIcon>
        </SystemButton>
        <SystemButton aria-label="홈">
          <StatusIcon $w={48} $h={48} viewBox="0 0 48 48" fill="none" stroke="currentColor" strokeWidth="5" aria-hidden="true">
            <rect x="2.500" y="2.500" width="43" height="43" rx="14" />
          </StatusIcon>
        </SystemButton>
        <SystemButton aria-label="뒤로">
          <StatusIcon $w={32} $h={48} viewBox="0 0 32 48" fill="none" stroke="currentColor" strokeWidth="4.500" strokeLinecap="round" strokeLinejoin="round" aria-hidden="true">
            <path d="M29 3L3 24l26 21" />
          </StatusIcon>
        </SystemButton>
      </SystemBar>
    </Screen>
  );
}
